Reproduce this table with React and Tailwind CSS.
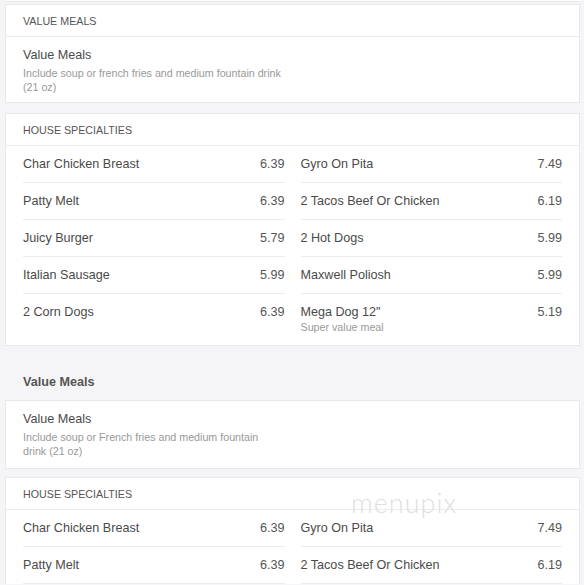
const houseLeft = [
  { name: 'Char Chicken Breast', price: '6.39' },
  { name: 'Patty Melt', price: '6.39' },
  { name: 'Juicy Burger', price: '5.79' },
  { name: 'Italian Sausage', price: '5.99' },
  { name: '2 Corn Dogs', price: '6.39' },
]

const houseRight = [
  { name: 'Gyro On Pita', price: '7.49' },
  { name: '2 Tacos Beef Or Chicken', price: '6.19' },
  { name: '2 Hot Dogs', price: '5.99' },
  { name: 'Maxwell Poliosh', price: '5.99' },
  { name: 'Mega Dog 12"', price: '5.19', desc: 'Super value meal' },
]

function Row({ item, last }) {
  return (
    <div className={`py-[10px] ${last ? '' : 'border-b border-[#ececec]'}`}>
      <div className="flex items-start justify-between text-[12.6px] leading-[16px]">
        <span className="text-[#4a4a4a]">{item.name}</span>
        <span className="text-[#555]">{item.price}</span>
      </div>
      {item.desc && <p className="text-[10.7px] leading-[15px] text-[#999]">{item.desc}</p>}
    </div>
  )
}

function Header({ children }) {
  return (
    <div className="border-b border-[#ececec] px-[17px] pt-[9px] pb-[7px] text-[10.7px] uppercase leading-[15px] text-[#555]">
      {children}
    </div>
  )
}

function ValueItem({ desc, pb }) {
  return (
    <div className={`px-[17px] pt-[10px] ${pb}`}>
      <p className="text-[12.6px] leading-[16px] text-[#4a4a4a]">Value Meals</p>
      <p className="mt-[3px] max-w-[260px] text-[10.7px] leading-[14px] text-[#999]">{desc}</p>
    </div>
  )
}

function House({ rows, openEnd }) {
  return (
    <div className="grid grid-cols-2 gap-4 px-[17px]">
      {[houseLeft, houseRight].map((col, i) => (
        <div key={i} className="flex flex-col">
          {col.slice(0, rows).map((item, j) => (
            <Row key={item.name} item={item} last={!openEnd && j === rows - 1} />
          ))}
        </div>
      ))}
    </div>
  )
}

export default function App() {
  return (
    <div className="relative h-[585px] overflow-hidden bg-[#f5f5f7] pl-[5px] pr-[4px] font-['Liberation_Sans',Arial,sans-serif]">
      <div className="h-[2px] border-b border-[#e6e6e6] bg-white" />

      <div className="mt-[2px] border border-[#e9e9e9] bg-white">
        <Header>Value Meals</Header>
        <ValueItem desc="Include soup or french fries and medium fountain drink (21 oz)" pb="pb-[8px]" />
      </div>

      <div className="mt-[10px] border border-[#e9e9e9] bg-white">
        <Header>House Specialties</Header>
        <House rows={5} />
      </div>

      <div className="px-[18px] pt-[28px] pb-[10px] text-[12.6px] font-bold leading-[16px] text-[#555]">
        Value Meals
      </div>

      <div className="border border-[#e9e9e9] bg-white">
        <ValueItem desc="Include soup or French fries and medium fountain drink (21 oz)" pb="pb-[10px]" />
      </div>

      <div className="mt-[8px] border border-b-0 border-[#e9e9e9] bg-white">
        <Header>House Specialties</Header>
        <House rows={2} openEnd />
      </div>

      <div className="pointer-events-none absolute left-[351px] top-[489px] font-['Lato',sans-serif] text-[27px] font-light leading-none tracking-[1px] text-[#e0e0e0]">
        menupix
      </div>
    </div>
  )
}
